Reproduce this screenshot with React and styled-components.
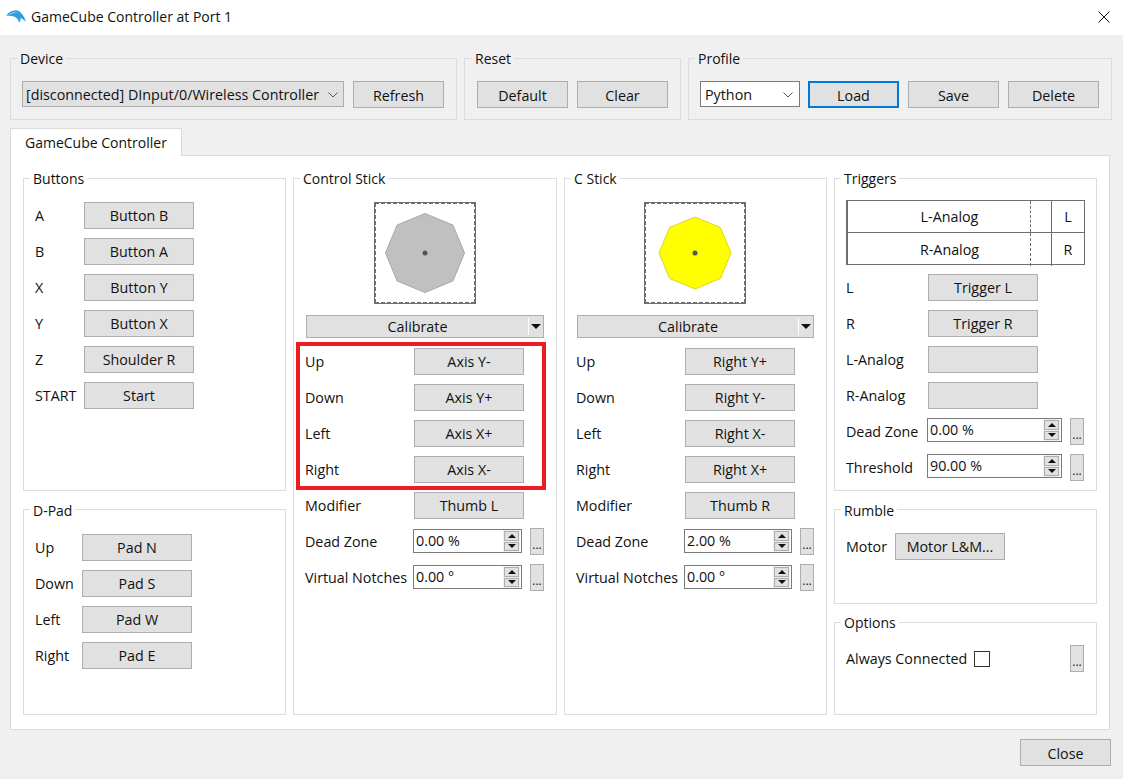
import React from "react";
import styled, { createGlobalStyle } from "styled-components";

const GlobalStyle = createGlobalStyle`
  html, body {
    margin: 0;
    padding: 0;
    background: #f0f0f0;
  }
  body {
    font-family: "Open Sans", "Noto Sans", sans-serif;
    font-size: 14.3px;
    color: #111;
    overflow: hidden;
  }
  * {
    box-sizing: border-box;
  }
`;

const Window = styled.div`
  width: 1123px;
  height: 779px;
  display: flex;
  flex-direction: column;
`;

const TitleBar = styled.div`
  height: 35px;
  flex: none;
  background: #fff;
  display: flex;
  align-items: center;
  padding: 0 13px 2px 6px;
`;

const TitleText = styled.div`
  margin-left: 5px;
  font-size: 14px;
  flex: 1;
`;

const Main = styled.div`
  flex: 1;
  padding: 14px 11px 0 10px;
  display: flex;
  flex-direction: column;
`;

const TopRow = styled.div`
  display: grid;
  grid-template-columns: 447px 217px 1fr;
  gap: 7px;
  height: 71px;
`;

const Group = styled.fieldset`
  margin: 0;
  min-width: 0;
  border: 1px solid #dcdcdc;
  padding: ${(p) => p.$top ?? 15}px 12px 0 ${(p) => p.$left ?? 11}px;
  height: ${(p) => (p.$height ? `${p.$height}px` : "auto")};
  flex: ${(p) => (p.$height ? "none" : "1")};
`;

const Legend = styled.legend`
  margin-left: -5px;
  padding: 0 3px;
  height: 18px;
  line-height: 20px;
  font-size: 14px;
`;

const ButtonRow = styled.div`
  display: flex;
  gap: 9px;
`;

const Button = styled.button`
  width: ${(p) => p.$width ?? 110}px;
  height: 27px;
  flex: none;
  padding: 0;
  background: #e1e1e1;
  border: 1px solid #adadad;
  font: inherit;
  color: inherit;
  ${(p) => p.$focused && "border: 2px solid #0078d7;"}
`;

const WideButton = styled(Button)`
  width: 91px;
  padding-top: 2px;
`;

const Combo = styled.div`
  width: ${(p) => p.$width}px;
  height: 26px;
  flex: none;
  margin-right: ${(p) => (p.$white ? "-1px" : "0")};
  display: flex;
  align-items: center;
  justify-content: space-between;
  padding: 1px ${(p) => (p.$white ? "6px 0 4px" : "5px 0 3px")};
  background: ${(p) => (p.$white ? "#fff" : "#e1e1e1")};
  border: 1px solid ${(p) => (p.$white ? "#7a7a7a" : "#adadad")};
`;

const TabBar = styled.div`
  margin-top: 8px;
  height: 27px;
  display: flex;
`;

const Tab = styled.div`
  width: 172px;
  height: 28px;
  background: #fff;
  border: 1px solid #dcdcdc;
  border-bottom: none;
  position: relative;
  z-index: 1;
  padding-left: 14px;
  font-size: 14px;
  line-height: 27px;
`;

const Pane = styled.div`
  width: 1100px;
  height: 575px;
  background: #fff;
  border: 1px solid #dcdcdc;
  padding: 13px 11px 0 12px;
`;

const Columns = styled.div`
  display: grid;
  grid-template-columns: 263px 264px 263px 263px;
  gap: 7px;
  height: 546px;
`;

const Column = styled.div`
  display: flex;
  flex-direction: column;
  gap: 9.5px;
  min-width: 0;
`;

const Stack = styled.div`
  display: flex;
  flex-direction: column;
  gap: 9px;
`;

const Row = styled.div`
  height: 27px;
  display: flex;
  align-items: center;
`;

const Label = styled.span`
  width: ${(p) => p.$width}px;
  flex: none;
  white-space: nowrap;
`;

const Spin = styled.div`
  flex: 1;
  align-self: flex-start;
  height: 24px;
  margin-top: ${(p) => p.$offset ?? 1}px;
  min-width: 0;
  background: #fff;
  border: 1px solid #7a7a7a;
  display: flex;
  align-items: center;
  justify-content: space-between;
  padding: 0 1px 0 2px;
`;

const SpinValue = styled.span`
  margin-bottom: 2px;
`;

const SpinArrows = styled.div`
  width: 17px;
  height: 22px;
  padding: 1px;
  background: #f0f0f0;
  display: flex;
  flex-direction: column;
  gap: 1px;
`;

const SpinArrow = styled.div`
  flex: 1;
  background: #e1e1e1;
  border: 1px solid #adadad;
  display: flex;
  align-items: center;
  justify-content: center;

  &::after {
    content: "";
    border-left: 4px solid transparent;
    border-right: 4px solid transparent;
    ${(p) => (p.$down ? "border-top: 4px solid #111;" : "border-bottom: 4px solid #111;")}
  }
`;

const MoreButton = styled.button`
  width: 14px;
  height: 27px;
  flex: none;
  margin-left: ${(p) => (p.$push ? "auto" : "8px")};
  padding: 6px 0 0;
  background: #e1e1e1;
  border: 1px solid #adadad;
  font: inherit;
  font-size: 12px;
  line-height: 14px;
  color: inherit;
`;

const dash = "#6e6e6e 0 4px, transparent 4px 6px";

const StickBox = styled.div`
  width: 102px;
  height: 102px;
  margin: 0 auto;
  border: 1px solid #6e6e6e;
  display: flex;
  background-color: #fff;
  background-repeat: no-repeat;
  background-image: repeating-linear-gradient(90deg, ${dash}),
    repeating-linear-gradient(90deg, ${dash}),
    repeating-linear-gradient(180deg, ${dash}),
    repeating-linear-gradient(180deg, ${dash});
  background-size: 100% 1px, 100% 1px, 1px 100%, 1px 100%;
  background-position: top left, bottom left, top left, top right;
`;

const Calibrate = styled.div`
  margin: 11px 0 10px 1px;
  height: 23px;
  background: #e1e1e1;
  border: 1px solid #adadad;
  display: flex;
`;

const CalibrateText = styled.div`
  flex: 1;
  text-align: center;
  line-height: 22px;
`;

const CalibrateArrow = styled.div`
  width: 15px;
  margin: 2px 0;
  border-left: 1px solid #fff;
  display: flex;
  align-items: center;
  justify-content: center;

  &::after {
    content: "";
    border-left: 5px solid transparent;
    border-right: 5px solid transparent;
    border-top: 5px solid #111;
  }
`;

// the red marker drawn on top of the screenshot
const Marked = styled.div`
  position: relative;
  display: flex;
  flex-direction: column;
  gap: 9px;

  &::after {
    content: "";
    position: absolute;
    top: -6px;
    bottom: -7px;
    left: -9px;
    right: -2px;
    border: 4px solid #ed1c24;
    pointer-events: none;
  }
`;

const TriggerBars = styled.div`
  width: 239px;
  margin-bottom: 9px;
  border: 1px solid #6e6e6e;
  border-left-width: 2px;
`;

const TriggerBar = styled.div`
  height: 31px;
  display: grid;
  grid-template-columns: 1fr 32px;
  text-align: center;
  line-height: 31px;

  & + & {
    height: 32px;
    line-height: 33px;
    border-top: 1px solid #6e6e6e;
  }
`;

const BarName = styled.div`
  position: relative;
  border-right: 1px solid #6e6e6e;

  &::after {
    content: "";
    position: absolute;
    top: 0;
    bottom: 0;
    right: 20px;
    border-left: 1px dashed #6e6e6e;
  }
`;

const CheckBox = styled.div`
  width: 16px;
  height: 16px;
  background: #fff;
  border: 1px solid #333;
`;

const Footer = styled.div`
  display: flex;
  justify-content: flex-end;
  margin: 9px 1px 0 0;
`;

const DolphinMark = styled.svg`
  margin-bottom: 1px;
`;

const Dolphin = () => (
  <DolphinMark width="20" height="13" viewBox="0 0 20 13">
    <path
      d="M0 5.5C3 2 6 .3 10 .2c4 .3 8 4.8 10 11.8-2-2-4-3.5-5.5-4 .5 1.5 0 3-1.5 4.5-.5-2.5-2-5-5-6C5 5.6 2 5.6 0 5.5Z"
      fill="#2b9fe0"
    />
    <path d="M3 4.2C6 2.2 9 1.6 12 2.4c-3 0-5.500.6-7.400 2Z" fill="#a9dcf5" />
  </DolphinMark>
);

const CloseIcon = () => (
  <svg width="12" height="12" viewBox="0 0 12 12">
    <path d="M.5.5l11 11M11.5.5l-11 11" stroke="#111" strokeWidth="1" fill="none" />
  </svg>
);

const Chevron = () => (
  <svg width="10" height="6" viewBox="0 0 10 6">
    <path d="M.5.5 5 5 9.5.5" stroke="#555" strokeWidth="1" fill="none" />
  </svg>
);

const octagon = (r) =>
  [0, 45, 90, 135, 180, 225, 270, 315]
    .map((deg) => {
      const a = (deg * Math.PI) / 180;
      return `${50 + r * Math.cos(a)},${50 + r * Math.sin(a)}`;
    })
    .join(" ");

const Stick = ({ radius, fill, stroke }) => (
  <StickBox>
    <svg width="100" height="100" viewBox="0 0 100 100">
      <polygon points={octagon(radius)} fill={fill} stroke={stroke} />
      <circle cx="50" cy="50" r="2.5" fill="#555" />
    </svg>
  </StickBox>
);

const MapRow = ({ label, value, width }) => (
  <Row>
    <Label $width={width}>{label}</Label>
    <Button>{value}</Button>
  </Row>
);

const SpinRow = ({ label, value, width, offset }) => (
  <Row>
    <Label $width={width}>{label}</Label>
    <Spin $offset={offset}>
      <SpinValue>{value}</SpinValue>
      <SpinArrows>
        <SpinArrow />
        <SpinArrow $down />
      </SpinArrows>
    </Spin>
    <MoreButton>...</MoreButton>
  </Row>
);

const StickGroup = ({ title, color, radius, stroke, dirs, modifier, deadZone }) => (
  <Group>
    <Legend>{title}</Legend>
    <Stick radius={radius} fill={color} stroke={stroke} />
    <Calibrate>
      <CalibrateText>Calibrate</CalibrateText>
      <CalibrateArrow />
    </Calibrate>
    <Stack>
      {title === "Control Stick" ? (
        <Marked>
          {dirs.map(([label, value]) => (
            <MapRow key={label} label={label} value={value} width={109} />
          ))}
        </Marked>
      ) : (
        dirs.map(([label, value]) => (
          <MapRow key={label} label={label} value={value} width={109} />
        ))
      )}
      <MapRow label="Modifier" value={modifier} width={109} />
      <SpinRow label="Dead Zone" value={deadZone} width={108} />
      <SpinRow label="Virtual Notches" value="0.00 °" width={108} />
    </Stack>
  </Group>
);

const buttons = [
  ["A", "Button B"],
  ["B", "Button A"],
  ["X", "Button Y"],
  ["Y", "Button X"],
  ["Z", "Shoulder R"],
  ["START", "Start"],
];

const dpad = [
  ["Up", "Pad N"],
  ["Down", "Pad S"],
  ["Left", "Pad W"],
  ["Right", "Pad E"],
];

const mainDirs = [
  ["Up", "Axis Y-"],
  ["Down", "Axis Y+"],
  ["Left", "Axis X+"],
  ["Right", "Axis X-"],
];

const cDirs = [
  ["Up", "Right Y+"],
  ["Down", "Right Y-"],
  ["Left", "Right X-"],
  ["Right", "Right X+"],
];

const App = () => {
  return (
    <Window>
      <GlobalStyle />
      <TitleBar>
        <Dolphin />
        <TitleText>GameCube Controller at Port 1</TitleText>
        <CloseIcon />
      </TitleBar>
      <Main>
        <TopRow>
          <Group $top={14}>
            <Legend>Device</Legend>
            <ButtonRow>
              <Combo $width={322}>
                <span>[disconnected] DInput/0/Wireless Controller</span>
                <Chevron />
              </Combo>
              <WideButton>Refresh</WideButton>
            </ButtonRow>
          </Group>
          <Group $top={14} $left={12}>
            <Legend>Reset</Legend>
            <ButtonRow>
              <WideButton>Default</WideButton>
              <WideButton>Clear</WideButton>
            </ButtonRow>
          </Group>
          <Group $top={14}>
            <Legend>Profile</Legend>
            <ButtonRow>
              <Combo $width={100} $white>
                <span>Python</span>
                <Chevron />
              </Combo>
              <WideButton $focused>Load</WideButton>
              <WideButton>Save</WideButton>
              <WideButton>Delete</WideButton>
            </ButtonRow>
          </Group>
        </TopRow>
        <TabBar>
          <Tab>GameCube Controller</Tab>
        </TabBar>
        <Pane>
          <Columns>
            <Column>
              <Group $height={322}>
                <Legend>Buttons</Legend>
                <Stack>
                  {buttons.map(([label, value]) => (
                    <MapRow key={label} label={label} value={value} width={49} />
                  ))}
                </Stack>
              </Group>
              <Group>
                <Legend>D-Pad</Legend>
                <Stack>
                  {dpad.map(([label, value]) => (
                    <MapRow key={label} label={label} value={value} width={47} />
                  ))}
                </Stack>
              </Group>
            </Column>
            <StickGroup
              title="Control Stick"
              color="#c0c0c0"
              stroke="#a8a8a8"
              radius={39.5}
              dirs={mainDirs}
              modifier="Thumb L"
              deadZone="0.00 %"
            />
            <StickGroup
              title="C Stick"
              color="#ffff00"
              stroke="#d8d820"
              radius={36}
              dirs={cDirs}
              modifier="Thumb R"
              deadZone="2.00 %"
            />
            <Column>
              <Group $height={322} $top={13}>
                <Legend>Triggers</Legend>
                <TriggerBars>
                  <TriggerBar>
                    <BarName>L-Analog</BarName>
                    <div>L</div>
                  </TriggerBar>
                  <TriggerBar>
                    <BarName>R-Analog</BarName>
                    <div>R</div>
                  </TriggerBar>
                </TriggerBars>
                <Stack>
                  <MapRow label="L" value="Trigger L" width={82} />
                  <MapRow label="R" value="Trigger R" width={82} />
                  <MapRow label="L-Analog" value="" width={82} />
                  <MapRow label="R-Analog" value="" width={82} />
                  <SpinRow label="Dead Zone" value="0.00 %" width={81} offset={0} />
                  <SpinRow label="Threshold" value="90.00 %" width={81} offset={0} />
                </Stack>
              </Group>
              <Group $height={103} $top={14}>
                <Legend>Rumble</Legend>
                <MapRow label="Motor" value="Motor L&M..." width={49} />
              </Group>
              <Group $top={14}>
                <Legend>Options</Legend>
                <Row>
                  <Label $width={128}>Always Connected</Label>
                  <CheckBox />
                  <MoreButton $push>...</MoreButton>
                </Row>
              </Group>
            </Column>
          </Columns>
        </Pane>
        <Footer>
          <WideButton>Close</WideButton>
        </Footer>
      </Main>
    </Window>
  );
};

export default App;
